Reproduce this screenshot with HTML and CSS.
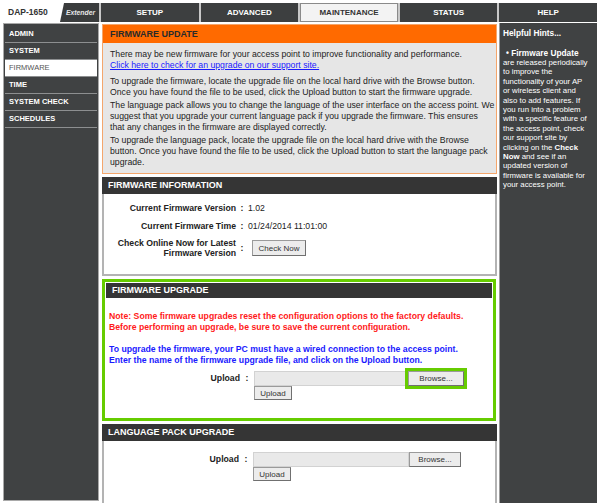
FILE: index.html
```html
<!DOCTYPE html>
<html lang="en">
<head>
    <meta charset="UTF-8">
    <title>DAP-1650 Firmware</title>
    <link rel="stylesheet" href="styles.css">
</head>
<body>
    <div class="page">
        <div class="topbar">
            <div class="brand"><span class="model">DAP-1650</span><span class="ext">Extender</span></div>
            <div class="tab">SETUP</div>
            <div class="tab">ADVANCED</div>
            <div class="tab active">MAINTENANCE</div>
            <div class="tab">STATUS</div>
            <div class="tab">HELP</div>
        </div>
        <div class="layout">
            <div class="sidenav">
                <div class="nav-item">ADMIN</div>
                <div class="nav-item">SYSTEM</div>
                <div class="nav-item active">FIRMWARE</div>
                <div class="nav-item">TIME</div>
                <div class="nav-item">SYSTEM CHECK</div>
                <div class="nav-item">SCHEDULES</div>
            </div>

            <div class="main">
                <div class="box box-intro">
                    <div class="box-head">FIRMWARE UPDATE</div>
                    <div class="box-body">
                        <p class="first">There may be new firmware for your access point to improve functionality and performance.<br>
                        <a href="#">Click here to check for an upgrade on our support site.</a></p>
                        <p>To upgrade the firmware, locate the upgrade file on the local hard drive with the Browse button.<br>
                        Once you have found the file to be used, click the Upload button to start the firmware upgrade.</p>
                        <p>The language pack allows you to change the language of the user interface on the access point. We<br>
                        suggest that you upgrade your current language pack if you upgrade the firmware. This ensures<br>
                        that any changes in the firmware are displayed correctly.</p>
                        <p>To upgrade the language pack, locate the upgrade file on the local hard drive with the Browse<br>
                        button. Once you have found the file to be used, click the Upload button to start the language pack<br>
                        upgrade.</p>
                    </div>
                </div>

                <div class="box">
                    <div class="box-head">FIRMWARE INFORMATION</div>
                    <div class="box-body info-body">
                        <div class="form-row">
                            <span class="label">Current Firmware Version</span><span class="colon">:</span><span class="value">1.02</span>
                        </div>
                        <div class="form-row">
                            <span class="label">Current Firmware Time</span><span class="colon">:</span><span class="value">01/24/2014 11:01:00</span>
                        </div>
                        <div class="form-row">
                            <span class="label">Check Online Now for Latest<br>Firmware Version</span><span class="colon">:</span><span class="value"><button class="btn">Check Now</button></span>
                        </div>
                    </div>
                </div>

                <div class="box box-highlight">
                    <div class="box-head">FIRMWARE UPGRADE</div>
                    <div class="box-body upgrade-body">
                        <p class="note">Note: Some firmware upgrades reset the configuration options to the factory defaults.<br>
                        Before performing an upgrade, be sure to save the current configuration.</p>
                        <p class="hint">To upgrade the firmware, your PC must have a wired connection to the access point.<br>
                        Enter the name of the firmware upgrade file, and click on the Upload button.</p>
                        <div class="form-row">
                            <span class="label">Upload</span><span class="colon">:</span>
                            <span class="value">
                                <span class="file"><span class="file-name"></span><button class="btn browse marked">Browse...</button></span>
                                <button class="btn upload">Upload</button>
                            </span>
                        </div>
                    </div>
                </div>

                <div class="box">
                    <div class="box-head">LANGUAGE PACK UPGRADE</div>
                    <div class="box-body lang-body">
                        <div class="form-row">
                            <span class="label">Upload</span><span class="colon">:</span>
                            <span class="value">
                                <span class="file"><span class="file-name"></span><button class="btn browse">Browse...</button></span>
                                <button class="btn upload">Upload</button>
                            </span>
                        </div>
                    </div>
                </div>
            </div>

            <div class="help">
                <div class="help-title">Helpful Hints...</div>
                <div class="help-text">
                    <div class="help-item">&bull; Firmware Update</div>
                    are released periodically<br>
                    to improve the<br>
                    functionality of your AP<br>
                    or wireless client and<br>
                    also to add features. If<br>
                    you run into a problem<br>
                    with a specific feature of<br>
                    the access point, check<br>
                    our support site by<br>
                    clicking on the <b>Check</b><br>
                    <b>Now</b> and see if an<br>
                    updated version of<br>
                    firmware is available for<br>
                    your access point.
                </div>
            </div>
        </div>
    </div>
</body>
</html>
```

FILE: styles.css
```css
body {
    margin: 0;
    font-family: "Liberation Sans", Arial, sans-serif;
    font-size: 8.7px;
    color: #222;
    background-color: #fff;
}
.page {
    padding: 3px 3px 0 3px;
    height: 500px;
    overflow: hidden;
}

/* top tabs */
.topbar {
    display: grid;
    grid-template-columns: 96px repeat(5, 1fr);
    column-gap: 2px;
    height: 19px;
    background-color: #c9c9c9;
}
.brand {
    display: flex;
    background-color: #3a3c3d;
    overflow: hidden;
}
.model {
    width: 61px;
    flex-shrink: 0;
    padding-left: 5px;
    box-sizing: border-box;
    background-color: #fff;
    clip-path: polygon(0 0, 100% 0, calc(100% - 4px) 100%, 0 100%);
    font-weight: bold;
    font-size: 8.5px;
    line-height: 19px;
    color: #333;
}
.ext {
    padding-left: 2px;
    font-style: italic;
    font-weight: bold;
    font-size: 6.8px;
    line-height: 19px;
    color: #e6e6e6;
    white-space: nowrap;
}
.tab {
    background-color: #3d3f40;
    color: #fff;
    font-weight: bold;
    font-size: 8px;
    line-height: 19px;
    text-align: center;
}
.tab.active {
    background-color: #f3f3f3;
    color: #333;
    border: 1px solid #8a8a8a;
    line-height: 17px;
}

/* three columns */
.layout {
    display: grid;
    grid-template-columns: 96px 396px 98px;
    column-gap: 2px;
    margin-top: 1px;
    height: 480px;
}
.sidenav {
    background-color: #404243;
    border: 1px solid #a9a9a9;
    padding: 2px 1px 0 1px;
    height: 474px;
}
.nav-item {
    height: 16px;
    line-height: 16px;
    padding-left: 4px;
    border-bottom: 1px solid #8d8f90;
    color: #fff;
    font-weight: bold;
    font-size: 7.5px;
}
.nav-item.active {
    background-color: #fff;
    color: #555;
    font-weight: normal;
}

.main {
    padding-left: 1px;
    overflow: hidden;
}
.box {
    margin-bottom: 3px;
}
.box-head {
    height: 17px;
    line-height: 17px;
    padding-left: 6px;
    background-color: #353535;
    color: #fff;
    font-weight: bold;
    font-size: 9px;
}
.box-body {
    background-color: #fff;
    border: 2px solid #b3b3b3;
    border-top: 0;
}
.box-body p {
    margin: 0 0 2px 0;
    line-height: 11px;
}

.box-intro {
    margin-top: 1px;
    border: 1px solid #f4a66c;
}
.box-intro .box-head {
    height: 18px;
    line-height: 18px;
    background-color: #ff6a00;
    color: #2a2a2a;
    padding-left: 7px;
}
.box-intro .box-body {
    border: 0;
    background-color: #e6e6e6;
    padding: 6px 2px 3px 7px;
    white-space: nowrap;
}
.box-intro p.first {
    margin-bottom: 5px;
}
.box-intro .box-body a {
    color: #1a1aff;
}

.info-body {
    height: 82px;
    padding-top: 8px;
    box-sizing: border-box;
}
.form-row {
    display: grid;
    grid-template-columns: 132px 12px 1fr;
    align-items: center;
    margin-bottom: 6px;
}
.label {
    text-align: right;
    font-weight: bold;
    line-height: 10px;
}
.colon {
    text-align: center;
    font-weight: bold;
}
.value {
    line-height: 12px;
}
.info-body .form-row:last-child .value {
    padding-left: 4px;
}

.btn {
    font-family: "Liberation Sans", Arial, sans-serif;
    font-size: 8px;
    color: #333;
    background-color: #ececec;
    border: 1px solid #9a9a9a;
    border-right-color: #707070;
    border-bottom-color: #707070;
    padding: 0;
    height: 16px;
    width: 54px;
}

.box-highlight {
    border: 3px solid #66cc00;
    padding: 1px;
    margin-right: 1px;
}
.box-highlight .box-head {
    height: 15px;
    line-height: 15px;
}
.upgrade-body {
    border: 0;
    height: 119px;
    padding: 13px 4px 0 3px;
    box-sizing: border-box;
}
.upgrade-body p {
    font-weight: bold;
}
.upgrade-body p.note {
    margin-bottom: 11px;
}
.upgrade-body p.hint {
    margin-bottom: 5px;
}
.upgrade-body .form-row,
.lang-body .form-row {
    grid-template-columns: 131px 14px 1fr;
    align-items: start;
}
.upgrade-body .label,
.lang-body .label,
.upgrade-body .colon,
.lang-body .colon {
    line-height: 15px;
}
.note {
    color: #ff1a1a;
}
.hint {
    color: #1a1aff;
}
.file {
    display: flex;
    align-items: center;
    width: 210px;
}
.file-name {
    flex: 1;
    height: 13px;
    background-color: #e9e9e9;
    border: 1px solid #d2d2d2;
}
.browse {
    width: 56px;
    height: 15px;
}
.browse.marked {
    outline: 3px solid #66cc00;
}
.upload {
    display: block;
    width: 38px;
    height: 14px;
}

.lang-body {
    height: 70px;
    padding: 11px 0 0 5px;
    box-sizing: border-box;
}
.lang-body .form-row {
    grid-template-columns: 130px 14px 1fr;
}
.lang-body .file {
    width: 208px;
}
.lang-body .browse {
    width: 52px;
}

/* help column */
.help {
    background-color: #404243;
    border-left: 1px solid #9a9a9a;
    color: #fff;
    padding: 5px 2px 0 3px;
}
.help-title {
    font-weight: bold;
    font-size: 8.3px;
    line-height: 10px;
    margin-bottom: 10px;
}
.help-text {
    font-size: 7.8px;
    line-height: 9.4px;
    white-space: nowrap;
}
.help-item {
    font-weight: bold;
    font-size: 8.3px;
    line-height: 10px;
    padding-left: 3px;
}
```
